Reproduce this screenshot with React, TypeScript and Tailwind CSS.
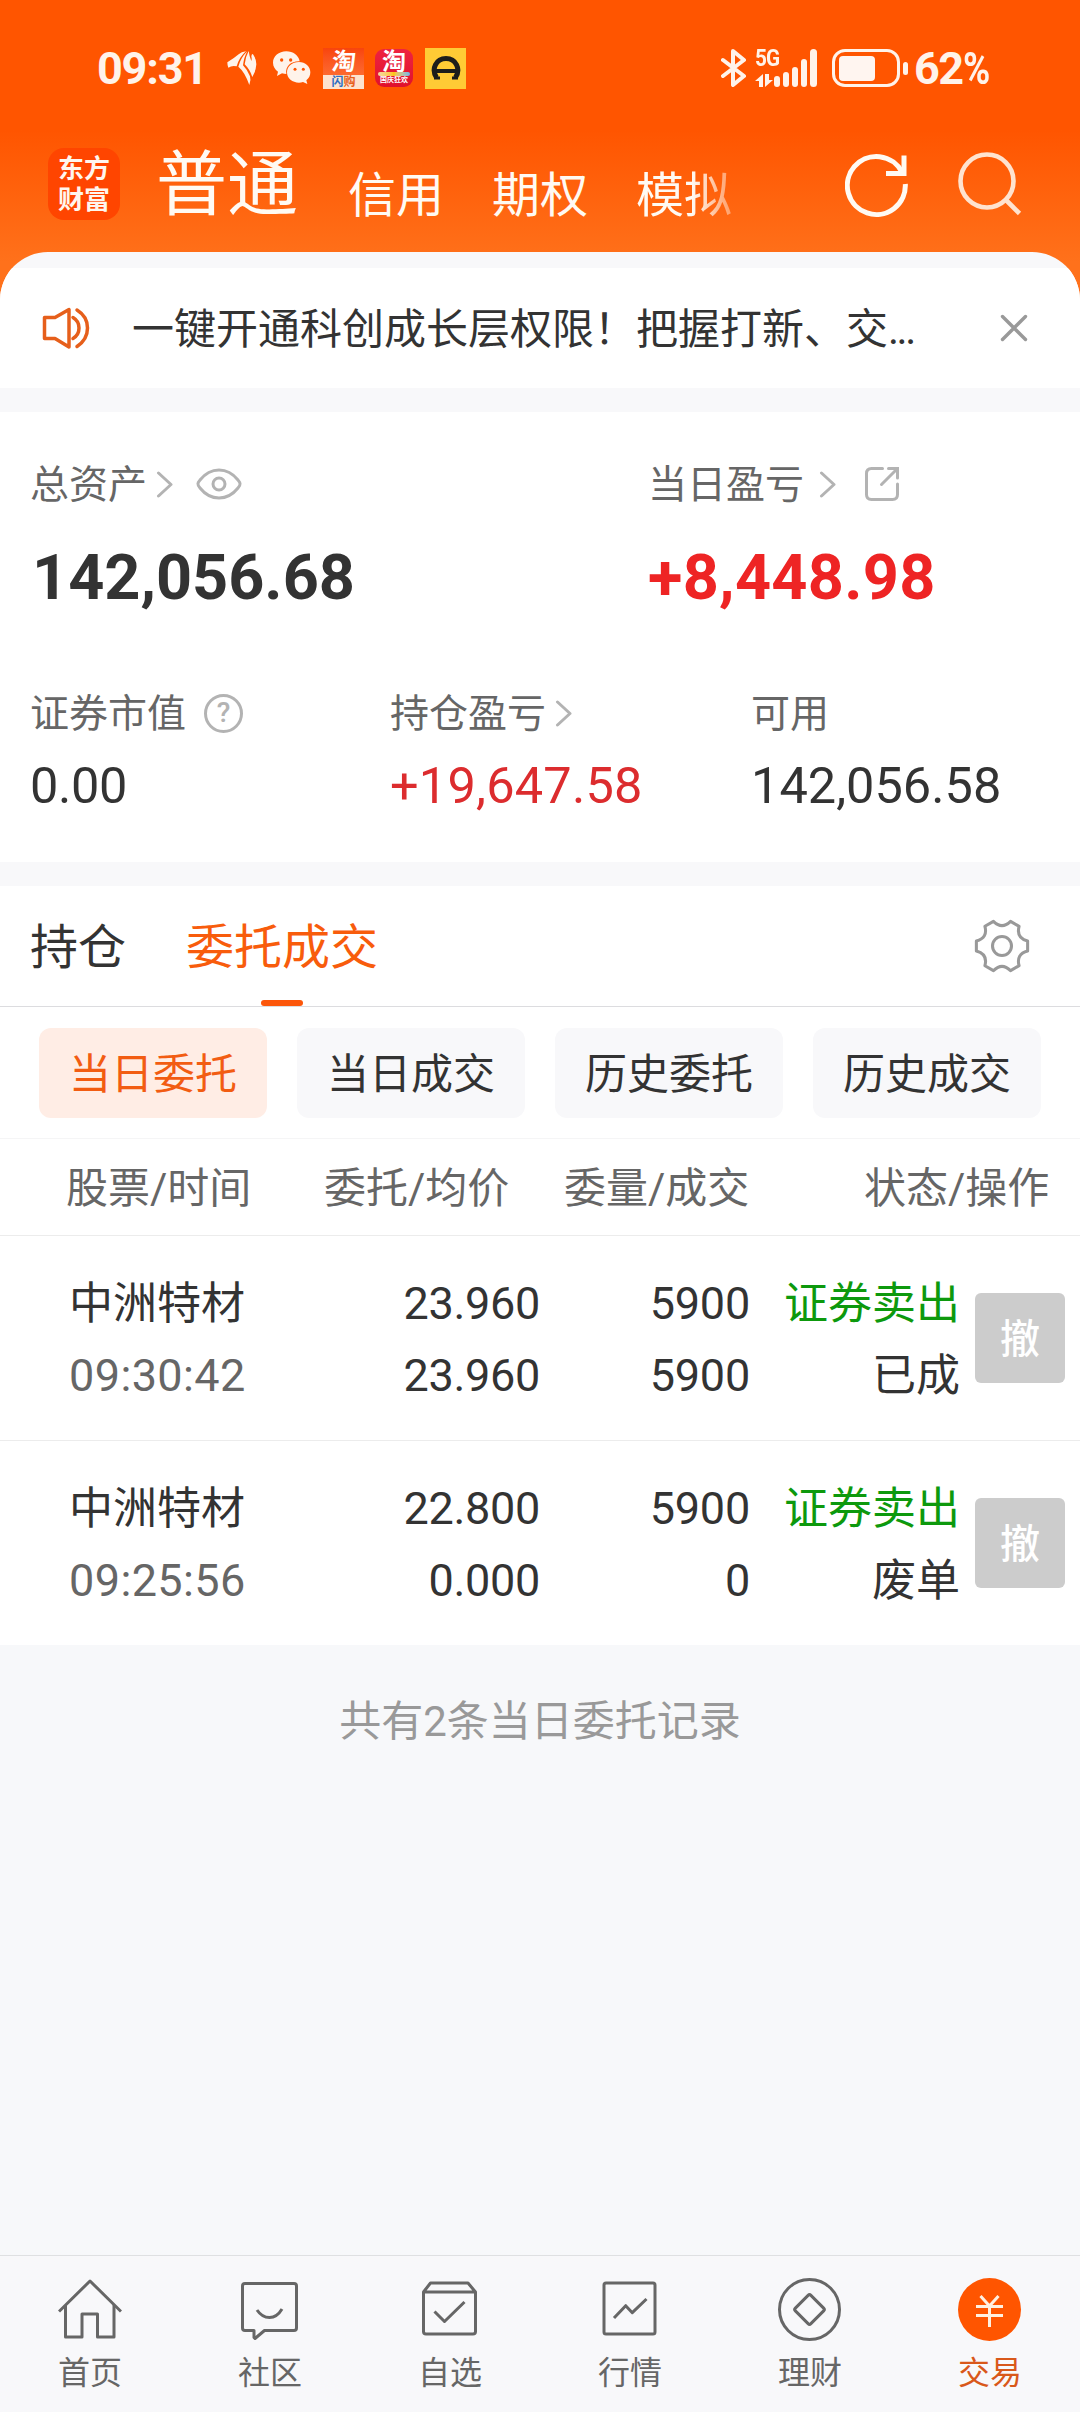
import React from "react";

type IconProps = { className?: string };

function FeatherIcon() {
  return (
    <svg className="h-[34px] w-[30px]" viewBox="0 0 88 102" fill="#fff3ea">
      <path d="M0 34Q20 22 34 10Q42 3 56 1Q36 18 28 46Q14 42 3 50Q0 44 0 34Z" />
      <path d="M60 1Q40 20 33 47Q52 62 66 102Q72 88 68 76Q60 56 47 43Q50 18 60 1Z" />
      <path d="M64 0Q54 18 52 40Q68 56 75 78Q86 60 87 40Q86 22 78 11Q74 6 72 16Q74 24 72 30Q66 16 64 0Z" />
    </svg>
  );
}

function WechatIcon() {
  return (
    <svg className="h-[34px] w-[38px]" viewBox="0 0 114 100" fill="#fff3ea">
      <path d="M40 0C17 0 0 15 0 34c0 11 6 20 15 27l-3 13 15-8c5 1 9 2 13 2C36 45 54 29 80 30 77 12 60 0 40 0Z" />
      <path d="M78 32c-21 0-36 13-36 31s16 31 36 31c4 0 8-1 12-2l13 6-3-11c8-6 12-14 12-24 0-18-15-31-34-31Z" />
      <g fill="#ff5500">
        <circle cx="26" cy="26" r="5" />
        <circle cx="53" cy="26" r="5" />
        <circle cx="66" cy="54" r="4.5" />
        <circle cx="91" cy="54" r="4.5" />
      </g>
    </svg>
  );
}

function StatusBar() {
  return (
    <div className="flex h-[136px] items-center pl-[97px] pr-[90px] text-[#fff3ea]">
      <span className="w-[130px] text-[45px] font-bold leading-none tracking-[-1.2px]">09:31</span>
      <FeatherIcon />
      <div className="ml-[16px] flex">
        <WechatIcon />
      </div>
      <div className="ml-[12px] flex h-[41px] w-[41px] flex-col items-center bg-gradient-to-b from-[#f8440c] to-[#ff7a3c]">
        <span className="h-[27px] -skew-x-6 text-[24px] font-bold leading-[29px] text-white">淘</span>
        <span className="h-[14px] w-full bg-[#fde3cf] text-center text-[12px] font-bold leading-[14px] text-[#e8601c]">
          <span className="text-[#2f6fc4]">闪</span>购
        </span>
      </div>
      <div className="ml-[11px] flex h-[38px] w-[38px] flex-col items-center rounded-[9px] bg-gradient-to-b from-[#ee2340] to-[#e0102c]">
        <span className="h-[24px] text-[24px] font-bold leading-[26px] text-white">淘</span>
        <span className="mt-[-1px] h-[4px] w-[32px] rounded-full bg-gradient-to-r from-[#f3d9a0] via-[#ffc400] to-[#6fb6e8]" />
        <span className="h-[10px] whitespace-nowrap text-[7px] font-bold leading-[9px] text-white">国庆狂欢</span>
      </div>
      <div className="ml-[12px] flex h-[41px] w-[41px] items-center justify-center bg-[#ffcb35]">
        <svg className="h-[24px] w-[30px]" viewBox="0 0 30 24" fill="none" stroke="#1d1d1b">
          <path d="M5.500 21.500C0 13 5 2.500 15 2.500S30 13 24.500 21.500" strokeWidth="5" />
          <path d="M5 15H25" strokeWidth="4" />
          <path d="M3 22H9M21 22H27" strokeWidth="3" />
        </svg>
      </div>

      <svg className="ml-auto h-[38px] w-[26px]" viewBox="0 0 26 38" fill="none" stroke="currentColor" strokeWidth="4" strokeLinejoin="round" strokeLinecap="round">
        <path d="M2 11L23 27L12 36V2L23 11L2 27" />
      </svg>
      <div className="ml-[8px] flex h-[38px] w-[64px]">
        <div className="flex w-[19px] flex-col justify-between">
          <span className="origin-left scale-x-90 text-[23px] font-bold leading-[20px] tracking-[-1px]">5G</span>
          <svg className="h-[13px] w-[18px]" viewBox="0 0 18 13" fill="currentColor">
            <path d="M0 7L8 0V13H4V7ZM18 6L10 13V0H14V6Z" />
          </svg>
        </div>
        <div className="flex items-end gap-[3px]">
          <span className="h-[11px] w-[6px] rounded-full bg-current" />
          <span className="h-[15px] w-[6px] rounded-full bg-current" />
          <span className="h-[20px] w-[6px] rounded-full bg-current" />
          <span className="h-[28px] w-[6px] rounded-full bg-current" />
          <span className="h-[38px] w-[7px] rounded-full bg-current" />
        </div>
      </div>
      <div className="ml-[13px] flex h-[38px] w-[68px] items-center rounded-[13px] border-[3px] border-current pl-[4px]">
        <div className="h-[25px] w-[36px] rounded-[4px] bg-[#fff5f0]" />
      </div>
      <div className="ml-[3px] h-[13px] w-[5px] rounded-full bg-current" />
      <span className="ml-[6px] w-[76px] whitespace-nowrap text-[45px] font-bold leading-none">
        <span className="tracking-[-1.5px]">62</span>
        <span className="inline-block w-[27px] origin-left scale-x-[0.82]">%</span>
      </span>
    </div>
  );
}

function Header() {
  return (
    <div className="flex h-[116px] items-start pl-[48px]">
      <div className="mt-[12px] flex h-[72px] w-[72px] flex-col items-center justify-center gap-[3px] rounded-[16px] bg-[#ff4500] text-[26px] font-bold leading-[28px] text-[#fff6ee]">
        <span className="h-[28px]">东方</span>
        <span className="h-[28px]">财富</span>
      </div>
      <div className="ml-[36px] flex h-[96px] text-[#fffaf3]">
        <span className="w-[192px] whitespace-nowrap text-[71px] leading-[98px]">普通</span>
        <span className="w-[144px] text-[48px] leading-[119px]">信用</span>
        <span className="w-[144px] text-[48px] leading-[119px]">期权</span>
        <span className="w-[142px] text-[48px] leading-[119px] [mask-image:linear-gradient(to_right,black_56px,transparent_120px)]">
          模拟
        </span>
      </div>
      <svg className="ml-[67px] mt-[18px] h-[64px] w-[64px]" viewBox="0 0 64 64" fill="none" stroke="#fffaf3" strokeWidth="5">
        <path d="M60.300 30A29 29 0 1 1 57 18" />
        <path d="M59 1.500V19.500H41" />
      </svg>
      <svg className="ml-[49px] mt-[16px] h-[64px] w-[64px]" viewBox="0 0 64 64" fill="none" stroke="#ffe3cf" strokeWidth="4.600">
        <circle cx="29" cy="29" r="26.500" />
        <path d="M47.500 47.500L61.500 61.500" />
      </svg>
    </div>
  );
}

function Notice() {
  return (
    <div className="flex h-[136px] flex-col overflow-hidden rounded-t-[48px] bg-[#f8f8fa]">
      <div className="mt-[16px] flex h-[120px] items-center bg-white pl-[42px]">
        <svg className="h-[42px] w-[48px]" viewBox="0 0 48 42" fill="none" stroke="#e65f1b" strokeWidth="3.500" strokeLinejoin="round" strokeLinecap="round">
          <path d="M2.500 10.500H13L27 2.500V40L13 31.500H2.500Z" />
          <path d="M31 10.500Q37 14 37 21T31 31.500" />
          <path d="M35 3Q45.500 9.500 45.500 21T35 39.500" />
        </svg>
        <span className="ml-[42px] mt-[3px] text-[42px] leading-none text-[#333]">
          一键开通科创成长层权限！把握打新、交
          <span className="tracking-[-2.5px]">...</span>
        </span>
        <svg className="ml-auto mr-[52px] h-[28px] w-[28px]" viewBox="0 0 28 28" stroke="#999" strokeWidth="3.400" strokeLinecap="round">
          <path d="M2.500 2.500L25.500 25.500M25.500 2.500L2.500 25.500" />
        </svg>
      </div>
    </div>
  );
}

function Chevron({ className = "" }: IconProps) {
  return (
    <svg className={"h-[28px] w-[18px] " + className} viewBox="0 0 18 28" fill="none" stroke="#b3b3b3" strokeWidth="3" strokeLinecap="round" strokeLinejoin="round">
      <path d="M2.500 3L15 14.500L2.500 26" />
    </svg>
  );
}

function Assets() {
  return (
    <section className="mt-[24px] h-[450px] bg-white pt-[48px] text-[#333]">
      <div className="flex pl-[30px]">
        <div className="w-[618px]">
          <div className="flex h-[48px] items-center text-[39px] leading-none text-[#666]">
            <span className="mt-[2px]">总资产</span>
            <Chevron className="ml-[9px]" />
            <svg className="ml-[22px] h-[32px] w-[46px]" viewBox="0 0 46 32" fill="none" stroke="#b3b3b3" strokeWidth="3">
              <path d="M2 16Q1.800 14.500 4 12Q12 2 23 2T42 12Q44.200 14.500 44 16Q44.200 17.500 42 20Q34 30 23 30T4 20Q1.800 17.500 2 16Z" />
              <circle cx="23" cy="16" r="6" />
            </svg>
          </div>
          <div className="mt-[34px] pl-[2px] text-[63px] font-bold leading-[72px]">142,056.68</div>
        </div>
        <div>
          <div className="flex h-[48px] items-center text-[39px] leading-none text-[#666]">
            <span className="mt-[2px]">当日盈亏</span>
            <Chevron className="ml-[15px]" />
            <svg className="ml-[27px] h-[36px] w-[36px]" viewBox="0 0 36 36" fill="none" stroke="#b3b3b3" strokeWidth="3" strokeLinecap="round">
              <path d="M18.500 2.500H7.500Q2.500 2.500 2.500 7.500V28.500Q2.500 33.500 7.500 33.500H28.500Q33.500 33.500 33.500 28.500V18" />
              <path d="M17.500 18.500L33 3M24.500 2.500H33.500V12" />
            </svg>
          </div>
          <div className="mt-[34px] text-[63px] font-bold leading-[72px] tracking-[0.3px] text-[#ee2424]">+8,448.98</div>
        </div>
      </div>
      <div className="mt-[75px] flex pl-[30px]">
        <div className="w-[360px]">
          <div className="flex h-[48px] items-center text-[39px] leading-none text-[#666]">
            <span className="mt-[2px]">证券市值</span>
            <span className="ml-[18px] flex h-[39px] w-[39px] items-center justify-center rounded-full border-[3px] border-[#b3b3b3] text-[28px] font-medium leading-none text-[#b3b3b3]">
              ?
            </span>
          </div>
          <div className="mt-[19px] text-[50.500px] leading-[60px] tracking-[-0.4px]">0.00</div>
        </div>
        <div className="w-[361px]">
          <div className="flex h-[48px] items-center text-[39px] leading-none text-[#666]">
            <span className="mt-[2px]">持仓盈亏</span>
            <Chevron className="ml-[9px]" />
          </div>
          <div className="mt-[19px] text-[50.500px] leading-[60px] tracking-[0.2px] text-[#dc2c2e]">+19,647.58</div>
        </div>
        <div>
          <div className="flex h-[48px] items-center text-[39px] leading-none text-[#666]">
            <span className="mt-[2px]">可用</span>
          </div>
          <div className="mt-[19px] text-[50.500px] leading-[60px]">142,056.58</div>
        </div>
      </div>
    </section>
  );
}

function Tabs() {
  return (
    <div className="mt-[24px] flex h-[121px] items-start border-b border-[#dcdcdf] bg-white pl-[30px] pr-[50px] text-[48px] leading-[124px] text-[#333]">
      <span className="h-[120px]">持仓</span>
      <div className="ml-[60px] flex h-[120px] flex-col items-center text-[#f85c0c]">
        <span className="h-[114px]">委托成交</span>
        <span className="h-[6px] w-[42px] rounded-full bg-[#fc560a]" />
      </div>
      <svg className="ml-auto mt-[32px] h-[56px] w-[56px]" viewBox="-29.500 -29.500 59 59" fill="none" stroke="#999" strokeWidth="3.200" strokeLinejoin="round">
        <path d="M-9 -26Q0 -17 9 -26L18 -20.800Q14.700 -8.500 27 -5.200V5.200Q14.700 8.500 18 20.800L9 26Q0 17 -9 26L-18 20.800Q-14.700 8.500 -27 5.200V-5.200Q-14.700 -8.500 -18 -20.800Z" />
        <circle r="10" />
      </svg>
    </div>
  );
}

function Chips() {
  const chips = ["当日委托", "当日成交", "历史委托", "历史成交"];
  return (
    <div className="flex h-[132px] items-start gap-[30px] border-b border-[#f5f5f6] bg-white pl-[39px] pt-[21px]">
      {chips.map((label, i) => (
        <span
          key={label}
          className={
            "h-[90px] w-[228px] rounded-[12px] text-center text-[42px] leading-[93px] " +
            (i === 0 ? "bg-[#ffede5] text-[#f25c12]" : "bg-[#f8f8fa] text-[#333]")
          }
        >
          {label}
        </span>
      ))}
    </div>
  );
}

type Order = {
  name: string;
  time: string;
  price: string;
  avg: string;
  qty: string;
  filled: string;
  side: string;
  status: string;
};

const orders: Order[] = [
  { name: "中洲特材", time: "09:30:42", price: "23.960", avg: "23.960", qty: "5900", filled: "5900", side: "证券卖出", status: "已成" },
  { name: "中洲特材", time: "09:25:56", price: "22.800", avg: "0.000", qty: "5900", filled: "0", side: "证券卖出", status: "废单" },
];

function OrderRow({ order }: { order: Order }) {
  return (
    <div className="flex h-[205px] items-start border-b border-[#ececec] bg-white pl-[69px] pt-[32px] text-[45px] leading-[72px] text-[#333] last:h-[204px] last:border-b-0">
      <div className="w-[190px]">
        <div className="text-[44px]">{order.name}</div>
        <div className="tracking-[0.4px] text-[#666]">{order.time}</div>
      </div>
      <div className="w-[281px] text-right tracking-[-0.3px]">
        <div>{order.price}</div>
        <div>{order.avg}</div>
      </div>
      <div className="w-[210px] text-right tracking-[-0.2px]">
        <div>{order.qty}</div>
        <div>{order.filled}</div>
      </div>
      <div className="w-[210px] text-right text-[44px]">
        <div className="text-[#0d990d]">{order.side}</div>
        <div>{order.status}</div>
      </div>
      <div className="ml-[15px] mt-[25px] h-[90px] w-[90px] rounded-[6px] bg-[#ccc] text-center text-[40px] font-medium leading-[93px] text-white">撤</div>
    </div>
  );
}

function Orders() {
  return (
    <>
      <div className="flex h-[97px] border-b border-[#ececec] bg-white pl-[66px] text-[42px] leading-[99px] text-[#666]">
        <span className="w-[258px]">股票/时间</span>
        <span className="w-[240px]">委托/均价</span>
        <span className="w-[300px]">委量/成交</span>
        <span>状态/操作</span>
      </div>
      <div>
        {orders.map((o) => (
          <OrderRow key={o.time} order={o} />
        ))}
      </div>
      <div className="grow bg-[#f7f8fa] pt-[47px] text-center text-[42px] leading-[60px] text-[#999]">共有2条当日委托记录</div>
    </>
  );
}

const navItems = [
  {
    label: "首页",
    icon: (
      <>
        <path d="M1 33.500L32 3L63 33.500" />
        <path d="M7.500 27V59H24V36H39.500V59H56V27" />
      </>
    ),
  },
  {
    label: "社区",
    icon: (
      <>
        <path d="M7 5.500H56Q58.500 5.500 58.500 8V50Q58.500 52.500 56 52.500H26.500L17 60.500L16 59.500V52.500H7Q4.500 52.500 4.500 50V8Q4.500 5.500 7 5.500Z" />
        <path d="M19 32Q24 39.500 31.500 39.500T44 31" />
      </>
    ),
  },
  {
    label: "自选",
    icon: (
      <>
        <path d="M5.500 14L12.500 5H50L57.500 14V53.500Q57.500 56 55 56H8Q5.500 56 5.500 53.500ZM5.500 14H57.500" />
        <path d="M16.500 33.500L26.500 43.500L46.500 24" />
      </>
    ),
  },
  {
    label: "行情",
    icon: (
      <>
        <rect x="6" y="5" width="51" height="51" rx="2" />
        <path d="M16 40L27.700 27.700L34.300 34.700L48.500 21" />
      </>
    ),
  },
  {
    label: "理财",
    icon: (
      <>
        <circle cx="31.500" cy="31.500" r="30" />
        <rect x="20.500" y="20.500" width="22" height="22" rx="2" transform="rotate(45 31.500 31.500)" />
      </>
    ),
  },
  {
    label: "交易",
    active: true,
    icon: (
      <>
        <circle cx="31.500" cy="31.500" r="31.500" fill="#ff5500" stroke="none" />
        <path d="M22.500 18L31.500 28L40.500 18M18 28.500H45M18 37.500H45M31.500 28V49" stroke="#fff0e0" />
      </>
    ),
  },
];

function BottomNav() {
  return (
    <nav className="flex h-[157px] border-t border-[#dfe0e2] bg-[#f8f8fa] pt-[22px]">
      {navItems.map((item) => (
        <div key={item.label} className="flex w-[180px] flex-col items-center">
          <svg className="h-[64px] w-[64px]" viewBox="0 0 64 64" fill="none" stroke="#666" strokeWidth="3" strokeLinejoin="round">
            {item.icon}
          </svg>
          <span className={"mt-[11px] text-[32px] leading-[40px] " + (item.active ? "text-[#d9581a]" : "text-[#666]")}>{item.label}</span>
        </div>
      ))}
    </nav>
  );
}

export default function App() {
  return (
    <div className="flex h-[2412px] w-[1080px] flex-col overflow-hidden bg-[#f8f8fa] font-['Roboto','Noto_Sans_CJK_SC',sans-serif]">
      <div className="bg-[linear-gradient(to_bottom,#ff5500_130px,#ff711b_262px)]">
        <StatusBar />
        <Header />
        <Notice />
      </div>
      <Assets />
      <Tabs />
      <Chips />
      <Orders />
      <BottomNav />
    </div>
  );
}
